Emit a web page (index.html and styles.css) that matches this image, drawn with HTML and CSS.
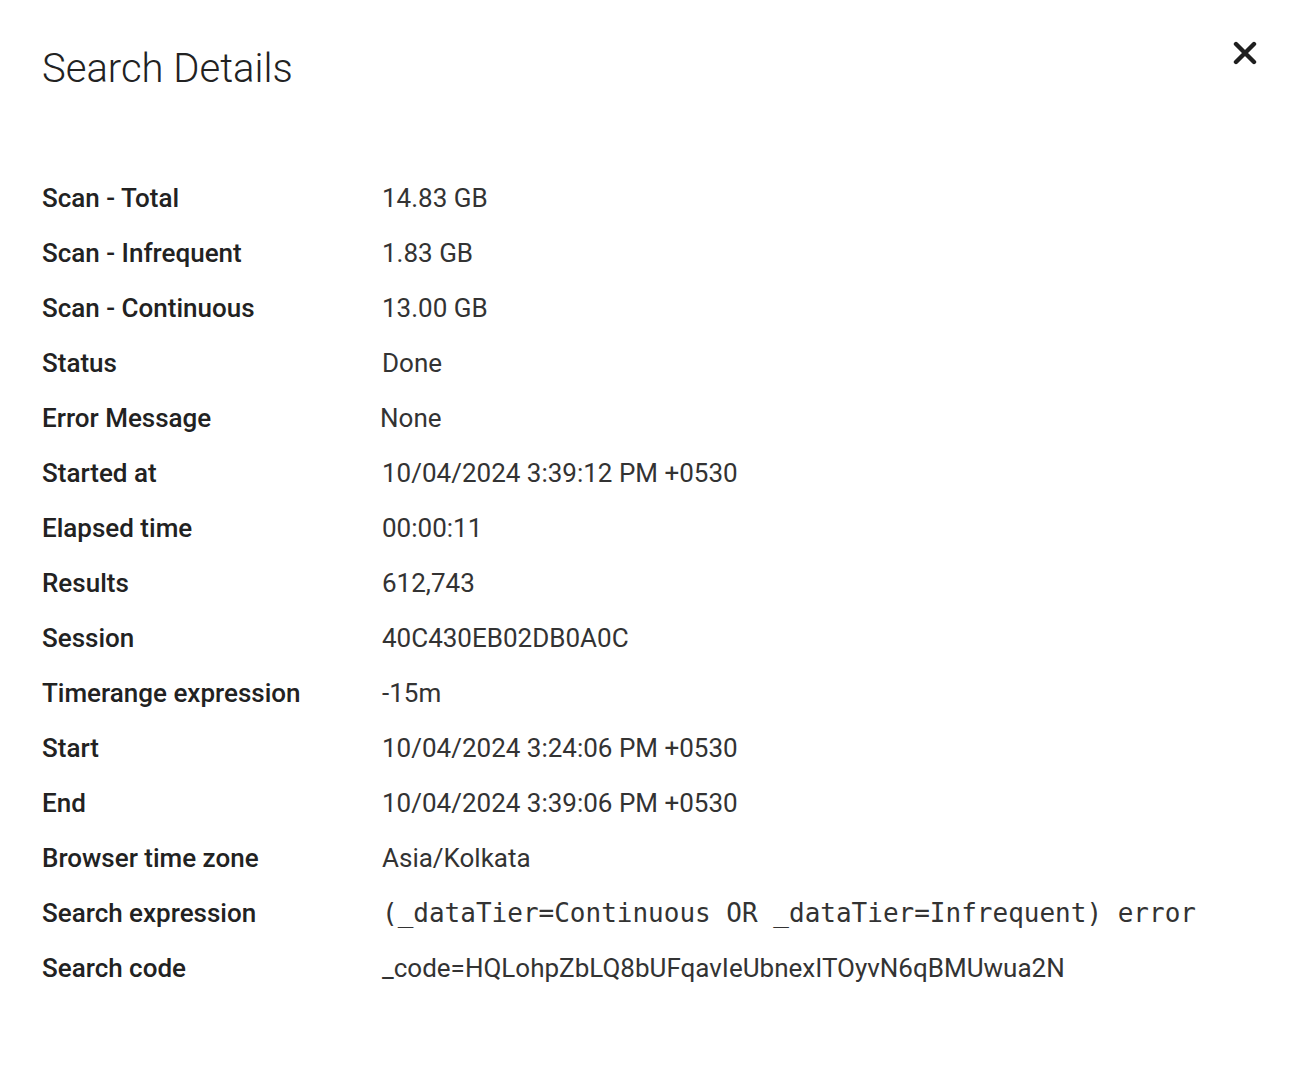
FILE: index.html
```html
<!DOCTYPE html>
<html>
<head>
<meta charset="utf-8">
<link rel="stylesheet" href="styles.css">
</head>
<body>
<div class="dialog">
  <div class="header">
    <h1 class="title">Search Details</h1>
    <button class="close" aria-label="Close">
      <svg width="24" height="24" viewBox="0 0 24 24"><path d="M3 3 L21 21 M21 3 L3 21" stroke="#1f1f1f" stroke-width="4.4" stroke-linecap="round"/></svg>
    </button>
  </div>
  <dl class="details">
    <dt>Scan - Total</dt><dd>14.83 GB</dd>
    <dt>Scan - Infrequent</dt><dd>1.83 GB</dd>
    <dt>Scan - Continuous</dt><dd>13.00 GB</dd>
    <dt>Status</dt><dd>Done</dd>
    <dt>Error Message</dt><dd class="shift">None</dd>
    <dt>Started at</dt><dd>10/04/2024 3:39:12 PM +0530</dd>
    <dt>Elapsed time</dt><dd>00:00:11</dd>
    <dt>Results</dt><dd>612,743</dd>
    <dt>Session</dt><dd>40C430EB02DB0A0C</dd>
    <dt>Timerange expression</dt><dd>-15m</dd>
    <dt>Start</dt><dd>10/04/2024 3:24:06 PM +0530</dd>
    <dt>End</dt><dd>10/04/2024 3:39:06 PM +0530</dd>
    <dt>Browser time zone</dt><dd>Asia/Kolkata</dd>
    <dt>Search expression</dt><dd class="mono">(_dataTier=Continuous OR _dataTier=Infrequent) error</dd>
    <dt>Search code</dt><dd>_code=HQLohpZbLQ8bUFqavIeUbnexITOyvN6qBMUwua2N</dd>
  </dl>
</div>
</body>
</html>
```
FILE: styles.css
```css
html, body {
  margin: 0;
  padding: 0;
  background: #ffffff;
}
body {
  font-family: Roboto, "Liberation Sans", sans-serif;
  color: #222222;
}
.dialog {
  padding: 45px 45px 0 42px;
}
.header {
  display: flex;
  justify-content: space-between;
  align-items: flex-start;
}
.title {
  margin: 0;
  font-size: 40px;
  font-weight: 300;
  line-height: 48px;
  color: #222222;
}
.close {
  border: 0;
  background: none;
  padding: 0;
  margin-top: -4px;
  width: 24px;
  height: 24px;
  cursor: pointer;
}
.close svg {
  display: block;
}
.details {
  margin: 77px 0 0 0;
  display: grid;
  grid-template-columns: 340px 1fr;
  grid-auto-rows: 55px;
  align-items: center;
}
.details dt {
  font-size: 26px;
  font-weight: 500;
  color: #222222;
}
.details dd {
  margin: 0;
  font-size: 26px;
  font-weight: 400;
  color: #333333;
  white-space: nowrap;
}
.details dd.shift {
  margin-left: -2px;
}
.details dd.mono {
  font-family: "DejaVu Sans Mono", "Liberation Mono", monospace;
  font-size: 26px;
  letter-spacing: 0;
}
```
